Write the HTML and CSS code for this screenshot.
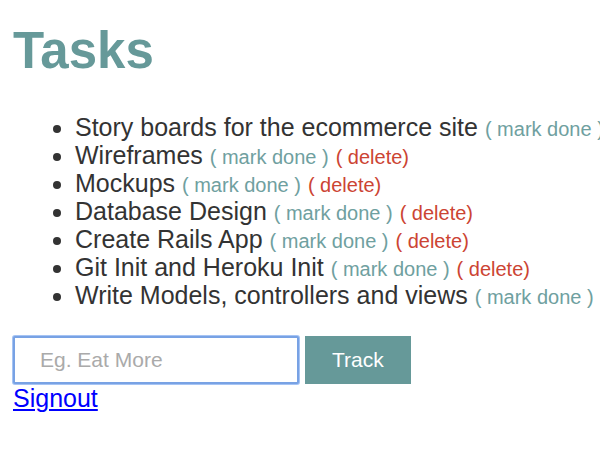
FILE: index.html
```html
<!DOCTYPE html>
<html lang="en">
<head>
<meta charset="utf-8">
<title>Tasks</title>
<link rel="stylesheet" href="styles.css">
</head>
<body>
<main>
<h1>Tasks</h1>
<ul class="tasks">
<li>Story boards for the ecommerce site <a class="action done" href="#">( mark done )</a> <a class="action delete" href="#">( delete)</a></li>
<li>Wireframes <a class="action done" href="#">( mark done )</a> <a class="action delete" href="#">( delete)</a></li>
<li>Mockups <a class="action done" href="#">( mark done )</a> <a class="action delete" href="#">( delete)</a></li>
<li>Database Design <a class="action done" href="#">( mark done )</a> <a class="action delete" href="#">( delete)</a></li>
<li>Create Rails App <a class="action done" href="#">( mark done )</a> <a class="action delete" href="#">( delete)</a></li>
<li>Git Init and Heroku Init <a class="action done" href="#">( mark done )</a> <a class="action delete" href="#">( delete)</a></li>
<li>Write Models, controllers and views <a class="action done" href="#">( mark done )</a> <a class="action delete" href="#">( delete)</a></li>
</ul>
<form class="add">
<input class="field" type="text" aria-label="New task" placeholder="Eg. Eat More">
<button class="track" type="button">Track</button>
</form>
<a class="signout" href="#">Signout</a>
</main>
</body>
</html>
```

FILE: styles.css
```css
* {
  box-sizing: border-box;
}

body {
  margin: 0;
  padding: 21px 0 0 13px;
  overflow: hidden;
  background: #fff;
  color: #333;
  font: 25px/28px "Liberation Sans", Arial, sans-serif;
}

h1 {
  margin: 0 0 32px;
  color: #669999;
  font-size: 51px;
  line-height: 60px;
}

.tasks {
  margin: 0 0 27px;
  padding-left: 62px;
  white-space: nowrap;
}

.action {
  font-size: 20px;
  line-height: 20px;
  text-decoration: none;
}

.done {
  color: #6fa0a0;
}

.delete {
  color: #cc4433;
}

.add {
  display: flex;
  gap: 6px;
}

.field {
  width: 286px;
  height: 48px;
  padding: 0 25px;
  border: 2px solid #78a2e4;
  border-radius: 2px;
  box-shadow: 0 0 0 1px #a6c4f4;
  color: #333;
  font: 21px "Liberation Sans", Arial, sans-serif;
}

.field::placeholder {
  color: #aaa;
}

.track {
  height: 48px;
  padding: 0 27px;
  border: 0;
  background: #669999;
  color: #fff;
  font: 21px "Liberation Sans", Arial, sans-serif;
}

.signout {
  color: #0000ff;
}
```
